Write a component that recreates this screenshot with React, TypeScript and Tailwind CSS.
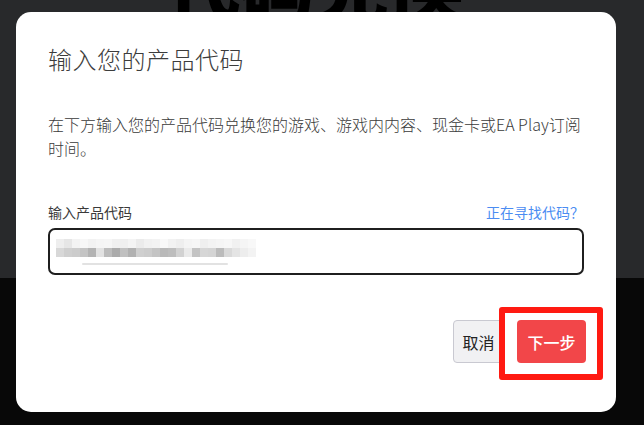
import React from "react";

const topRow = ["#eeeeee","#e6e6e6","#f3f3f3","#f7f7f7","#f2f2f2","#f5f5f5","#f6f6f6","#f0f0f0","#efefef","#f4f4f4","#ebebeb","#f1f1f1","#f3f3f3","#f9f9f9","#f2f2f2","#eeeeee","#f4f4f4","#f6f6f6","#efefef","#f3f3f3","#f5f5f5","#f7f7f7","#f1f1f1","#f5f5f5","#f8f8f8"];
const botRow = ["#d8d8d8","#cfcfcf","#cccccc","#c4c4c4","#b3b3b3","#e2e2e2","#bcbcbc","#ababab","#c0c0c0","#b1b1b1","#cfcfcf","#cccccc","#c4c4c4","#b9b9b9","#bdbdbd","#d2d2d2","#eaeaea","#c3c3c3","#d6d6d6","#d4d4d4","#bbbbbb","#d9d9d9","#e4e4e4","#ededed","#f3f3f3"];

export default function App() {
  const font = { fontFamily: '"Noto Sans CJK SC", "Noto Sans", sans-serif' } as React.CSSProperties;
  return (
    <div className="relative w-[644px] h-[425px] overflow-hidden" style={font}>
      <div className="h-[278px] bg-[#28292b] flex justify-center overflow-hidden">
        <div className="text-[76px] font-black text-black leading-none mt-[-55px] ml-[-18px] tracking-[-2px]">代码兑换</div>
      </div>
      <div className="h-[147px] bg-[#080808]" />

      <div className="absolute left-[16px] top-[12px] w-[600px] h-[400px] bg-white rounded-[15px] pl-[32px] pr-[32px] pt-[31px] flex flex-col">
        <h1 className="text-[24px] leading-[32px] font-light text-[#3c3c3c] tracking-[0.5px]">输入您的产品代码</h1>
        <p className="mt-[37px] text-[16px] leading-[24px] font-light text-[#3a3a3a]">
          在下方输入您的产品代码兑换您的游戏、游戏内内容、现金卡或EA Play订阅时间。
        </p>
        <div className="mt-[42px] flex justify-between items-center text-[14px] leading-[20px]">
          <span className="text-[#3a3a3a]">输入产品代码</span>
          <span className="text-[#4b8cf2]">正在寻找代码？</span>
        </div>
        <div className="mt-[6px] h-[47px] border-2 border-[#1f1f1f] rounded-[7px] flex flex-col justify-center pl-[6px]">
          <div className="flex">
            {topRow.map((c, i) => (
              <div key={i} className="w-[8px] h-[9px]" style={{ backgroundColor: c }} />
            ))}
          </div>
          <div className="flex">
            {botRow.map((c, i) => (
              <div key={i} className="w-[8px] h-[9px]" style={{ backgroundColor: c }} />
            ))}
          </div>
          <div className="mt-[6px] ml-[26px] w-[146px] h-[2px] bg-[#e2e2e2] rounded-full" />
        </div>
        <div className="mt-[45px] flex justify-end gap-[13px] mr-[-2px]">
          <button className="w-[51px] h-[43px] rounded-[4px] bg-[#f1f1f3] border border-[#c9c9d1] text-[16px] text-[#222]">取消</button>
          <button className="w-[69px] h-[43px] rounded-[4px] bg-[#f24649] text-[16px] font-medium text-white">下一步</button>
        </div>
      </div>

      <div className="absolute left-[499px] top-[307px] w-[104px] h-[73px] border-[6px] border-[#ff1a12] rounded-[3px]" />
    </div>
  );
}
